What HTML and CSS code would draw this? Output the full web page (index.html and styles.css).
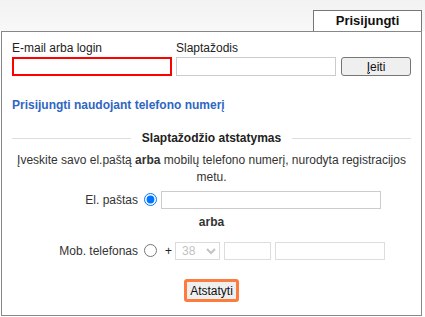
FILE: index.html
```html
<!DOCTYPE html>
<html lang="lt">
  <head>
    <meta charset="UTF-8" />
    <meta name="viewport" content="width=device-width, initial-scale=1" />
    <title>Prisijungti</title>
    <link rel="stylesheet" href="styles.css">
  </head>
  <body>
    <div class="topbar">
      <div class="tab">Prisijungti</div>
    </div>

    <div class="panel">
      <form class="login">
        <label class="field">
          <span>E-mail arba login</span>
          <input type="text" class="invalid" />
        </label>
        <label class="field">
          <span>Slaptažodis</span>
          <input type="password" />
        </label>
        <button type="button" class="btn"><u>Į</u>eiti</button>
      </form>

      <a href="#" class="phone-link">Prisijungti naudojant telefono numerį</a>

      <div class="divider"><span>Slaptažodžio atstatymas</span></div>

      <p class="hint">Įveskite savo el.paštą <b>arba</b> mobilų telefono numerį, nurodyta registracijos metu.</p>

      <div class="reset-row">
        <span class="reset-label">El. paštas</span>
        <input type="radio" name="by" checked />
        <input type="text" class="email-input" />
      </div>

      <div class="or">arba</div>

      <div class="reset-row">
        <span class="reset-label">Mob. telefonas</span>
        <input type="radio" name="by" />
        <span class="plus">+</span>
        <select class="code" disabled>
          <option>38</option>
        </select>
        <input type="text" class="area" disabled />
        <input type="text" class="number" disabled />
      </div>

      <div class="actions">
        <button type="button" class="btn reset">Atstatyti</button>
      </div>
    </div>
  </body>
</html>
```

FILE: styles.css
```css
body {
  margin: 0;
  font-family: "Liberation Sans", Arial, sans-serif;
  font-size: 12px;
  color: #222;
  background: #fff;
}
.topbar {
  height: 31px;
  display: flex;
  justify-content: flex-end;
  align-items: flex-end;
  padding-right: 3px;
  background: linear-gradient(#f2f2f2, #f8f8f8);
}
.tab {
  position: relative;
  width: 107px;
  height: 20px;
  line-height: 20px;
  text-align: center;
  font-weight: bold;
  font-size: 13px;
  color: #111;
  background: #fff;
  border: 1px solid #777;
  border-bottom: none;
}
.panel {
  margin: 0 3px 0 1px;
  border: 1px solid #888;
  background: #fff;
  padding: 9px 10px 12px;
  height: 262px;
}
.login {
  display: flex;
  align-items: flex-end;
  gap: 4px;
  margin: 0;
}
.field {
  display: flex;
  flex-direction: column;
  gap: 2px;
}
.field span {
  font-size: 12px;
  line-height: 14px;
}
.field input {
  box-sizing: border-box;
  width: 160px;
  height: 19px;
  margin: 0;
  border: 1px solid #ccc;
  padding: 0 3px;
}
.field input.invalid {
  border: 2px solid #f00;
}
.btn {
  font-family: "Liberation Sans", Arial, sans-serif;
  font-size: 12px;
  color: #111;
  background: #efefef;
  border: 1px solid #767676;
  border-radius: 3px;
  height: 19px;
  padding: 0 6px;
}
.login .btn {
  width: 72px;
  margin-left: 1px;
}
.login .btn u {
  text-decoration-thickness: 1px;
}
.phone-link {
  display: block;
  margin-top: 22px;
  color: #2f66c2;
  font-weight: bold;
  font-size: 12px;
  text-decoration: none;
}
.divider {
  display: flex;
  align-items: center;
  gap: 10px;
  margin-top: 19px;
  font-weight: bold;
  font-size: 12px;
  color: #222;
}
.divider::before,
.divider::after {
  content: "";
  flex: 1;
  border-top: 1px solid #ddd;
}
.divider span {
  padding: 0 1px;
}
.hint {
  margin: 7px 0 0;
  text-align: center;
  line-height: 17px;
  color: #333;
}
.reset-row {
  display: flex;
  align-items: center;
  margin-left: 36px;
  height: 19px;
}
.hint + .reset-row {
  margin-top: 4px;
}
.reset-label {
  width: 90px;
  white-space: nowrap;
  text-align: right;
  color: #333;
}
.reset-row input[type="radio"] {
  width: 13px;
  height: 13px;
  margin: 0 4px 0 6px;
}
.reset-row input[type="text"],
.reset-row select {
  box-sizing: border-box;
  height: 18px;
  margin: 0;
  border: 1px solid #ccc;
  background: #fff;
}
.email-input {
  width: 220px;
}
.plus {
  margin: 0 3px 0 4px;
}
.code {
  width: 45px;
  font-size: 12px;
  color: #aaa;
  padding: 0 2px;
}
.area {
  width: 47px;
  margin-left: 4px !important;
}
.number {
  width: 110px;
  margin-left: 4px !important;
}
.reset-row input:disabled {
  background: #fff;
  border-color: #ddd;
}
.or {
  text-align: center;
  font-weight: bold;
  color: #333;
  margin: 6px 0 12px;
}
.actions {
  display: flex;
  justify-content: center;
  margin-top: 19px;
}
.btn.reset {
  height: 23px;
  padding: 0 3px;
  border: 3px solid #fb7c3c;
  border-radius: 3px;
  background: #efefef;
  color: #111;
}
```
